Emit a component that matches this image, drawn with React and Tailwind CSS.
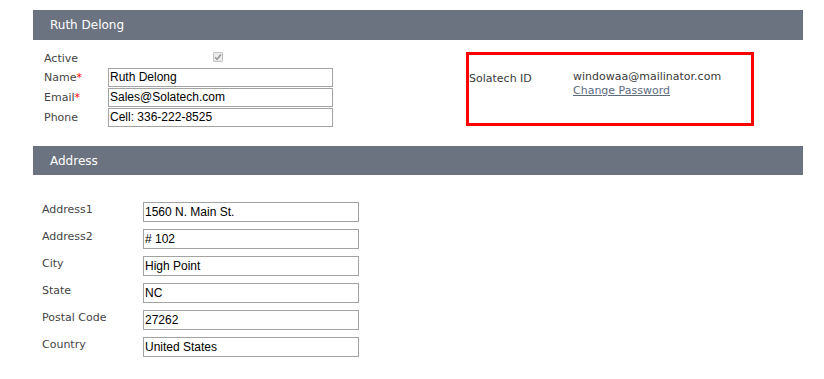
import React from "react";

const label = "font-['DejaVu_Sans',sans-serif] text-[11px] leading-[14px] text-[#444]";
const inputText = "font-['Liberation_Sans',Arial,sans-serif] text-[12px] text-black";

function TopRow({ name, req, value }) {
  return (
    <div className="flex h-[20px] items-start">
      <div className={`w-[64px] pt-[3px] ${label}`}>
        {name}
        {req && <span className="text-[#ff0000]">*</span>}
      </div>
      <div className={`h-[19px] w-[225px] border border-[#a3a3a3] bg-white pl-[1px] leading-[17px] ${inputText}`}>
        {value}
      </div>
    </div>
  );
}

function AddrRow({ name, value }) {
  return (
    <div className="flex h-[20px] items-start">
      <div className={`w-[101px] pt-[1px] ${label}`}>{name}</div>
      <div className={`h-[20px] w-[216px] border border-[#a3a3a3] bg-white pl-[1px] leading-[18px] ${inputText}`}>
        {value}
      </div>
    </div>
  );
}

export default function App() {
  return (
    <div className="min-h-[379px] w-[824px] bg-white pt-[10px]">
      <div className="ml-[33px] w-[770px]">
        <div className="flex h-[30px] items-center bg-[#6b7380] pl-[17px] font-['DejaVu_Sans',sans-serif] text-[12px] text-white">
          Ruth Delong
        </div>
        <div className="flex">
          <div className="w-[433px] pl-[11px] pt-[10px]">
            <div className="flex h-[18px] items-start">
              <div className={`w-[64px] pt-[2px] ${label}`}>Active</div>
              <div className="flex w-[225px] justify-center pt-[2px]">
                <span className="ml-[-6px] flex h-[10px] w-[10px] items-center justify-center rounded-[1px] border border-[#c4c4c4] bg-[#ececec]">
                  <svg width="8" height="8" viewBox="0 0 8 8">
                    <path d="M1 4.2 L3 6.2 L7 1.5" fill="none" stroke="#9a9a9a" strokeWidth="1.6" />
                  </svg>
                </span>
              </div>
            </div>
            <TopRow name="Name" req value="Ruth Delong" />
            <TopRow name="Email" req value="Sales@Solatech.com" />
            <TopRow name="Phone" value="Cell: 336-222-8525" />
          </div>
          <div className="mt-[12px] flex h-[74px] w-[288px] items-start border-[3px] border-[#ff0000] pt-[15px]">
            <div className="w-[104px] pt-[2px] font-['DejaVu_Sans',sans-serif] text-[11px] leading-[14px] text-[#3a3a3a]">
              Solatech ID
            </div>
            <div className="font-['DejaVu_Sans',sans-serif] text-[11px] leading-[14px] text-[#3a3a3a]">
              <div>windowaa@mailinator.com</div>
              <div className="text-[#5d6b80] underline">Change Password</div>
            </div>
          </div>
        </div>
        <div className="mt-[18px] flex h-[29px] items-center bg-[#6b7380] pl-[17px] font-['DejaVu_Sans',sans-serif] text-[12px] text-white">
          Address
        </div>
        <div className="flex flex-col gap-[7px] pl-[9px] pt-[27px]">
          <AddrRow name="Address1" value="1560 N. Main St." />
          <AddrRow name="Address2" value="# 102" />
          <AddrRow name="City" value="High Point" />
          <AddrRow name="State" value="NC" />
          <AddrRow name="Postal Code" value="27262" />
          <AddrRow name="Country" value="United States" />
        </div>
      </div>
    </div>
  );
}
